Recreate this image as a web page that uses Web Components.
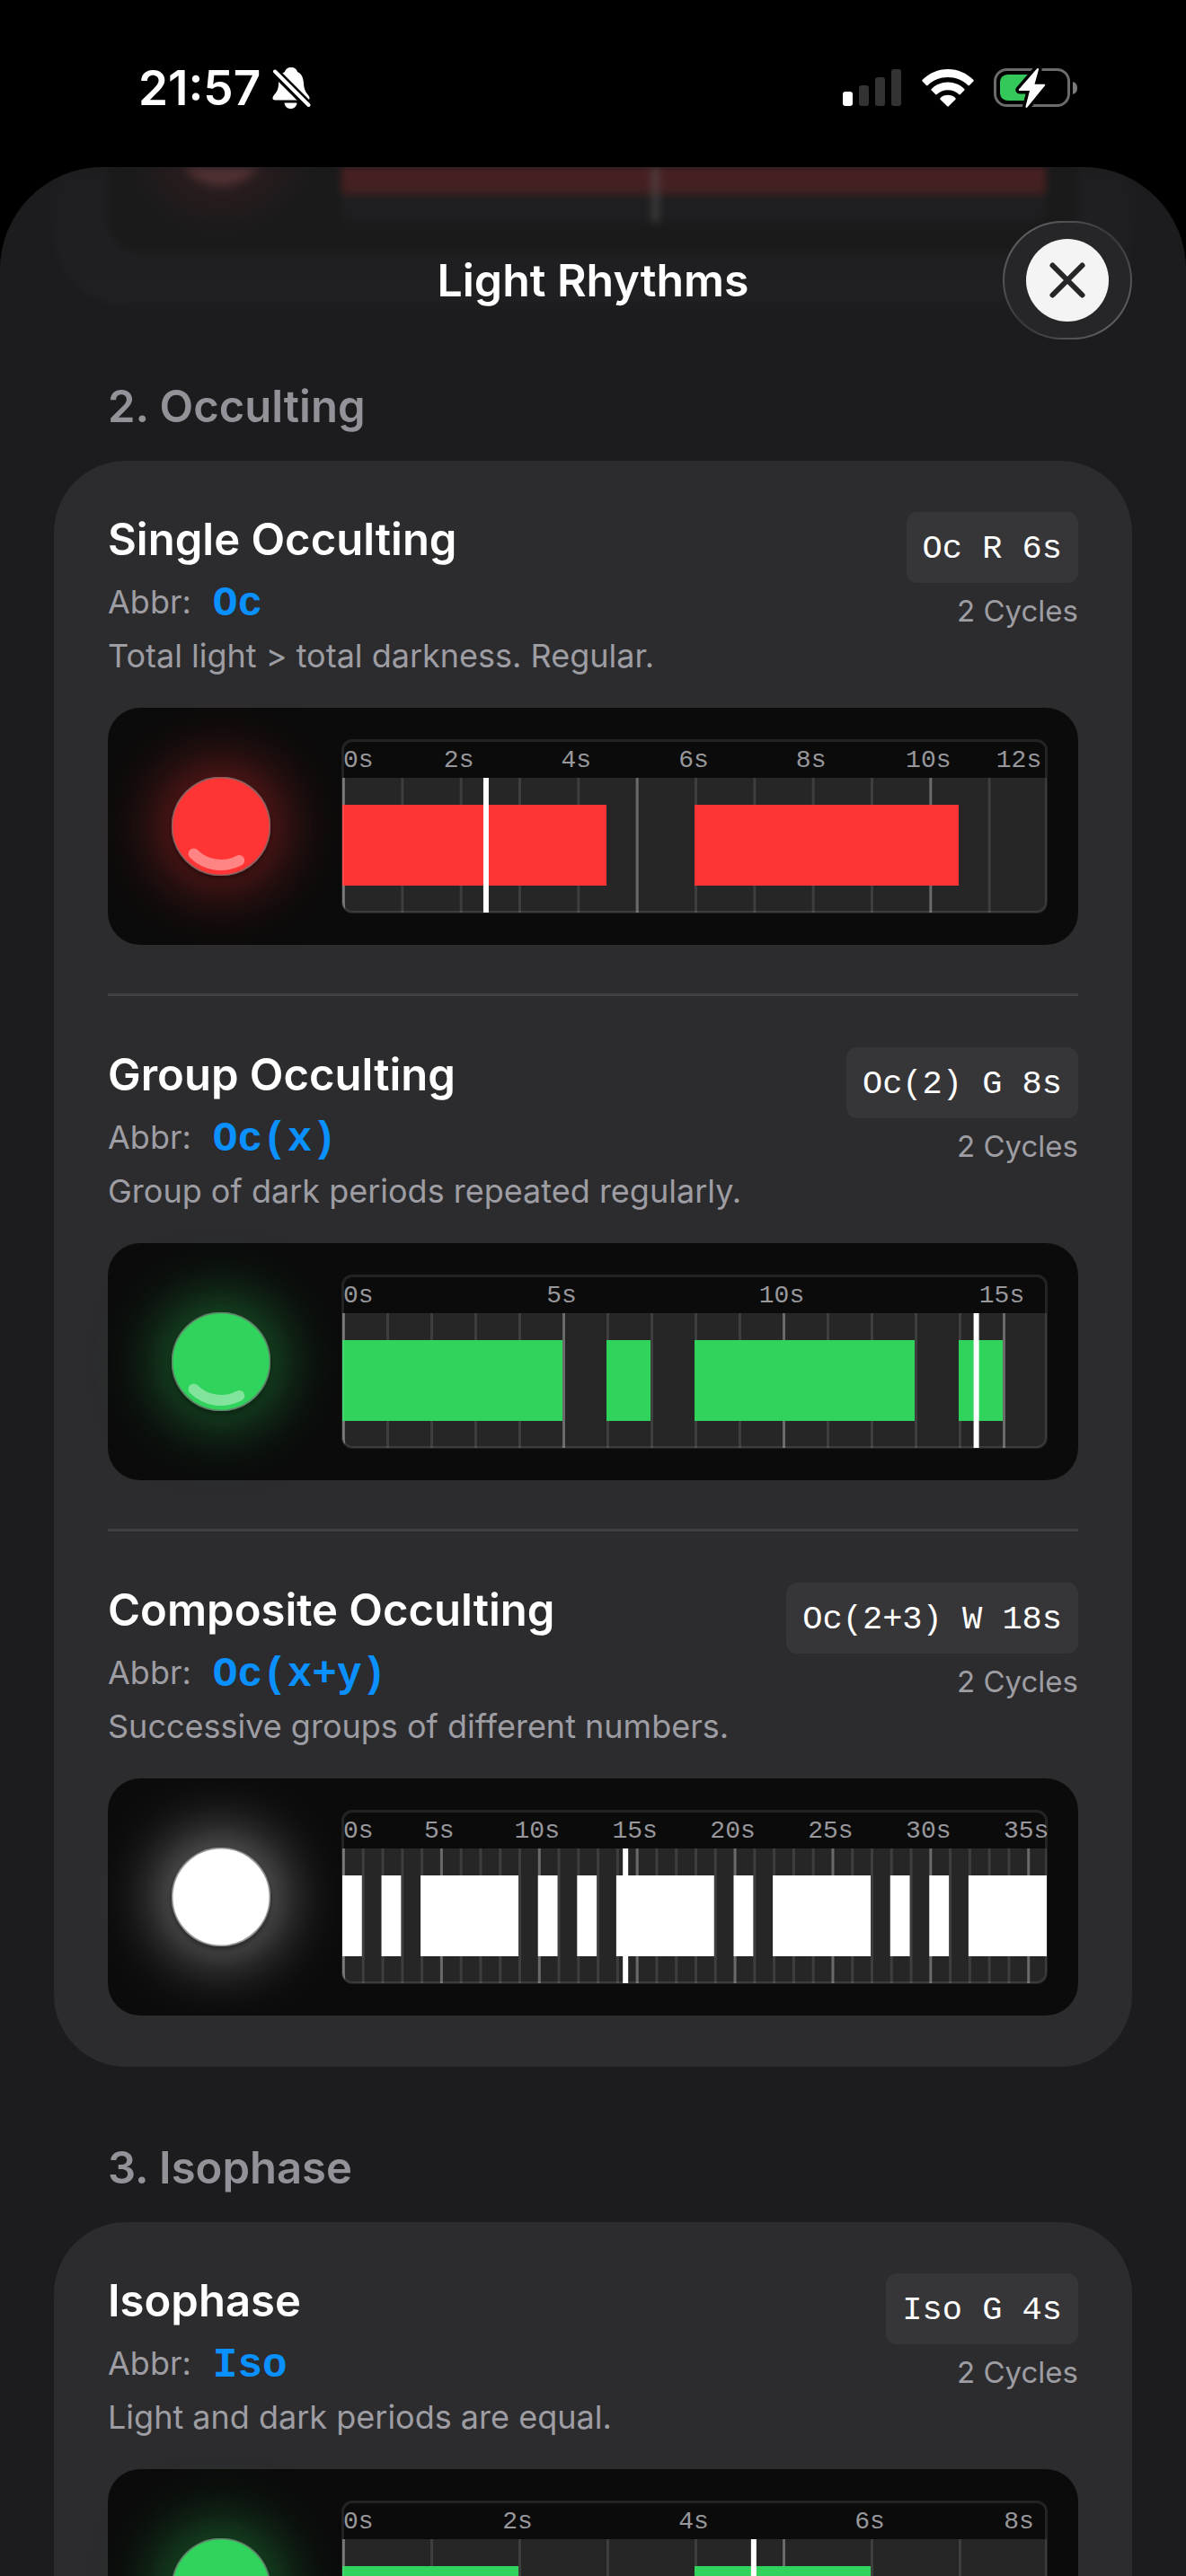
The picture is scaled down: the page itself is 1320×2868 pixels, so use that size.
<!DOCTYPE html>
<html lang="en">
<head>
<meta charset="utf-8">
<meta name="viewport" content="width=device-width, initial-scale=1">
<title>Light Rhythms</title>
<style>
  body {
    margin: 0;
    height: 100vh;
    overflow: hidden;
    display: flex;
    flex-direction: column;
    background: #000;
    color: #fff;
    font-family: Inter, "Liberation Sans", sans-serif;
  }
</style>
</head>
<body>
<status-bar time="21:57"></status-bar>
<app-sheet>
  <sheet-header slot="header">Light Rhythms</sheet-header>
  <rhythm-section heading="2. Occulting">
    <rhythm-item name="Single Occulting" abbr="Oc" code="Oc R 6s" color="#ff3434"
      total="12" step="2" lit="0-4.5 6-10.5" now="20.4">Total light &gt; total darkness. Regular.</rhythm-item>
    <rhythm-item name="Group Occulting" abbr="Oc(x)" code="Oc(2) G 8s" color="#30d35b"
      total="16" step="5" lit="0-5 6-7 8-13 14-15" now="90">Group of dark periods repeated regularly.</rhythm-item>
    <rhythm-item name="Composite Occulting" abbr="Oc(x+y)" code="Oc(2+3) W 18s" color="#ffffff"
      total="36" step="5" lit="0-1 2-3 4-9 10-11 12-13 14-19 20-21 22-27 28-29 30-31 32-36" now="40.2">Successive groups of different numbers.</rhythm-item>
  </rhythm-section>
  <rhythm-section heading="3. Isophase">
    <rhythm-item name="Isophase" abbr="Iso" code="Iso G 4s" color="#30d35b"
      total="8" step="2" lit="0-2 4-6" now="58.4">Light and dark periods are equal.</rhythm-item>
  </rhythm-section>
</app-sheet>

<script>
class StatusBar extends HTMLElement {
  connectedCallback() {
    this.attachShadow({ mode: "open" });
    this.shadowRoot.innerHTML = `
      <style>
        :host {
          display: flex;
          flex: none;
          justify-content: space-between;
          align-items: center;
          box-sizing: border-box;
          height: 186px;
          padding: 10px 120px 0 154px;
        }
        .group {
          display: flex;
          align-items: center;
        }
        .left { gap: 13px; }
        .right { gap: 22px; }
        time {
          font-size: 53px;
          font-weight: 600;
          line-height: 60px;
        }
        svg { display: block; }
      </style>
      <div class="group left">
        <time>${this.getAttribute("time")}</time>
        <svg width="43" height="47" viewBox="0 0 43 47" role="img" aria-label="Silent mode">
          <path fill="#fff" d="M21 0C17 0 14.600 2 14 5C9 7 7 12 7 18C7 26 4 28 1.500 31.500C-.5 34.500 .5 36.500 3.500 36.500H38.500C41.500 36.500 42.500 34.500 40.500 31.500C38 28 35.500 26 35 18C34.600 12 33 7 28 5C27.400 2 25 0 21 0Z"/>
          <path fill="#fff" d="M13.500 39.500H27.500C27 43.500 24.500 46 20.500 46S14 43.500 13.500 39.500Z"/>
          <path d="M2 4L41 43" stroke="#000" stroke-width="10"/>
          <path d="M3 4.500L40.500 42" stroke="#fff" stroke-width="4" stroke-linecap="round"/>
        </svg>
      </div>
      <div class="group right">
        <svg width="66" height="42" viewBox="0 0 66 42" role="img" aria-label="Signal">
          <rect x="0" y="25" width="11" height="16" rx="3" fill="#fff"/>
          <rect x="18" y="18" width="11" height="23" rx="3" fill="#333"/>
          <rect x="36" y="9" width="11" height="32" rx="3" fill="#333"/>
          <rect x="54" y="0" width="11" height="41" rx="3" fill="#333"/>
        </svg>
        <svg width="58" height="42" viewBox="0 0 58 42" role="img" aria-label="Wi-Fi">
          <g fill="#fff">
            <path d="M29 0C18 0 8 4.500 .7 11.800C.1 12.400 .1 13 .6 13.500L5 17.900C5.500 18.400 6.200 18.400 6.700 17.900C12.700 12.100 20.500 9 29 9S45.300 12.100 51.300 17.900C51.800 18.400 52.500 18.400 53 17.900L57.400 13.500C57.900 13 57.900 12.400 57.300 11.800C50 4.500 40 0 29 0Z"/>
            <path d="M29 14.500C21.900 14.500 15.500 17.300 10.800 21.900C10.200 22.500 10.200 23.100 10.700 23.600L15.100 28C15.600 28.500 16.200 28.500 16.800 28C20 25 24.300 23.200 29 23.200S38 25 41.200 28C41.800 28.500 42.400 28.500 42.900 28L47.300 23.600C47.800 23.100 47.800 22.500 47.200 21.900C42.500 17.300 36.100 14.500 29 14.500Z"/>
            <path d="M29 28.800C25.800 28.800 22.900 30 20.700 32C20.100 32.500 20.100 33.200 20.600 33.700L28.200 41.300C28.700 41.800 29.300 41.800 29.800 41.300L37.400 33.700C37.900 33.200 37.900 32.500 37.300 32C35.100 30 32.200 28.800 29 28.800Z"/>
          </g>
        </svg>
        <svg width="94" height="46" viewBox="0 0 94 46" role="img" aria-label="Battery charging">
          <rect x="1.500" y="2.500" width="82" height="40" rx="13" fill="none" stroke="#6b6b6b" stroke-width="3"/>
          <path d="M88 16C91.500 17 93 19.500 93 23S91.500 29 88 30Z" fill="#7a7a7a"/>
          <path d="M16 8H40V37H16C10.500 37 7 33.500 7 28V17C7 11.500 10.500 8 16 8Z" fill="#34c759"/>
          <path d="M48 1.500L28 24.500C27.500 25.300 28 26 28.900 26H40L35.500 43.500C35.200 45 36.500 45.500 37.500 44.300L57 20.300C57.500 19.500 57 18.800 56.100 18.800H45.500L50 2.500C50.300 1 49 .5 48 1.500Z" fill="#fff" stroke="#000" stroke-width="7" paint-order="stroke" stroke-linejoin="round"/>
        </svg>
      </div>
    `;
  }
}

class AppSheet extends HTMLElement {
  connectedCallback() {
    this.attachShadow({ mode: "open" });
    this.shadowRoot.innerHTML = `
      <style>
        :host {
          display: block;
          flex: 1;
          min-height: 0;
          overflow: hidden;
          background: #1c1c1e;
          border-radius: 114px 114px 0 0;
        }
        main {
          display: flex;
          flex-direction: column;
          gap: 82px;
          padding: 0 60px;
        }
      </style>
      <slot name="header"></slot>
      <main><slot></slot></main>
    `;
  }
}

class SheetHeader extends HTMLElement {
  connectedCallback() {
    this.attachShadow({ mode: "open" });
    this.shadowRoot.innerHTML = `
      <style>
        :host {
          display: grid;
          grid-template-columns: 144px 1fr 144px;
          align-items: center;
          position: relative;
          box-sizing: border-box;
          height: 236px;
          padding: 60px 60px 44px;
        }
        h1 {
          grid-column: 2;
          margin: 0;
          font-size: 50px;
          font-weight: 600;
          line-height: 62px;
          text-align: center;
        }
        h1, close-button { position: relative; }

        /* previous card, dimmed behind the bar */
        .behind {
          position: absolute;
          inset: 0;
          padding: 0 60px;
          filter: blur(4px);
        }
        .card {
          height: 154px;
          padding: 0 60px;
          border-radius: 0 0 80px 80px;
          background: linear-gradient(#1e1e20, #202022);
        }
        .panel {
          display: flex;
          justify-content: flex-end;
          height: 95px;
          padding-right: 36px;
          border-radius: 0 0 36px 36px;
          background: radial-gradient(circle at 126px -30px, #4f3032 46px, #281c1d 56px, #1a1a1b 110px);
        }
        .track {
          position: relative;
          width: 784px;
          height: 61px;
          border-radius: 0 0 12px 12px;
          background: #1e1e20;
        }
        .bar {
          height: 31px;
          background: linear-gradient(#4b2022, #402020);
        }
        .now {
          position: absolute;
          top: 0;
          left: 44%;
          width: 9px;
          height: 61px;
          background: rgba(90, 90, 92, .45);
        }
      </style>
      <div class="behind">
        <div class="card"><div class="panel"><div class="track"><div class="bar"></div><div class="now"></div></div></div></div>
      </div>
      <h1><slot></slot></h1>
      <close-button></close-button>
    `;
  }
}

class CloseButton extends HTMLElement {
  connectedCallback() {
    this.attachShadow({ mode: "open" });
    this.shadowRoot.innerHTML = `
      <style>
        :host { display: block; }
        button {
          display: flex;
          align-items: center;
          justify-content: center;
          box-sizing: border-box;
          width: 144px;
          height: 132px;
          margin: 0;
          padding: 0;
          border: 2px solid transparent;
          border-radius: 66px;
          background:
            linear-gradient(#262628, #262628) padding-box,
            linear-gradient(135deg, #5c5c61 15%, #3c3c40 45%, #3c3c40 55%, #5c5c61 85%) border-box;
          cursor: pointer;
        }
        svg { display: block; }
      </style>
      <button type="button" aria-label="Close">
        <svg width="92" height="92" viewBox="0 0 92 92">
          <circle cx="46" cy="46" r="46" fill="#f4f4f4"/>
          <path d="M29.500 29.500L62.500 62.500M62.500 29.500L29.500 62.500" stroke="#262628" stroke-width="6" stroke-linecap="round"/>
        </svg>
      </button>
    `;
  }
}

class RhythmSection extends HTMLElement {
  connectedCallback() {
    this.attachShadow({ mode: "open" });
    this.shadowRoot.innerHTML = `
      <style>
        :host { display: block; }
        h2 {
          margin: 0 0 30px;
          padding: 0 60px;
          font-size: 49px;
          font-weight: 600;
          line-height: 61px;
          color: #929298;
        }
        .card {
          padding: 0 60px 3px;
          border-radius: 80px;
          background: #2c2c2e;
        }
        ::slotted(:not(:last-child)) {
          border-bottom: 3px solid #404042;
        }
      </style>
      <h2>${this.getAttribute("heading")}</h2>
      <div class="card"><slot></slot></div>
    `;
  }
}

class RhythmItem extends HTMLElement {
  connectedCallback() {
    const get = (name) => this.getAttribute(name);
    this.attachShadow({ mode: "open" });
    this.shadowRoot.innerHTML = `
      <style>
        :host {
          display: block;
          padding: 57px 0 54px;
          color: #9d9da3;
          font-size: 36px;
          line-height: 43px;
        }
        .head {
          display: flex;
          justify-content: space-between;
          margin-bottom: 36px;
        }
        .info {
          display: flex;
          flex-direction: column;
          gap: 12px;
        }
        h3 {
          margin: 0;
          color: #fff;
          font-size: 49px;
          font-weight: 600;
          line-height: 61px;
        }
        .abbr {
          display: flex;
          align-items: center;
          gap: 24px;
          height: 54px;
        }
        .abbr b {
          padding-top: 6px;
          color: #0a91ff;
          font-family: "Liberation Mono", monospace;
          font-size: 46px;
          line-height: 54px;
        }
        p { margin: 0; }
        .side {
          display: flex;
          flex-direction: column;
          align-items: flex-end;
          gap: 11px;
        }
        code {
          padding: 20px 18px 16px;
          border-radius: 12px;
          background: #363638;
          color: #fff;
          font-family: "Liberation Mono", monospace;
          font-size: 37px;
          line-height: 43px;
        }
        .cycles {
          font-size: 33px;
          line-height: 40px;
        }
        .panel {
          display: flex;
          align-items: center;
          gap: 45px;
          padding: 36px 35px 36px 36px;
          border-radius: 36px;
          background: #0b0b0b;
        }
        signal-lamp { flex: none; }
        light-timeline { flex: 1; }
      </style>
      <div class="head">
        <div class="info">
          <h3>${get("name")}</h3>
          <div class="abbr"><span>Abbr:</span><b>${get("abbr")}</b></div>
          <p><slot></slot></p>
        </div>
        <div class="side">
          <code>${get("code")}</code>
          <span class="cycles">2 Cycles</span>
        </div>
      </div>
      <div class="panel">
        <signal-lamp color="${get("color")}"></signal-lamp>
        <light-timeline color="${get("color")}" total="${get("total")}" step="${get("step")}"
          lit="${get("lit")}" now="${get("now")}"></light-timeline>
      </div>
    `;
  }
}

class SignalLamp extends HTMLElement {
  connectedCallback() {
    const color = this.getAttribute("color");
    this.attachShadow({ mode: "open" });
    this.shadowRoot.innerHTML = `
      <style>
        :host {
          display: flex;
          justify-content: center;
          width: 180px;
        }
        .lamp {
          width: 110px;
          height: 110px;
          border-radius: 50%;
          background: ${color};
          box-shadow: 0 3px 6px rgba(0, 0, 0, .5), 0 0 72px 10px ${color}80;
        }
        svg { display: block; }
      </style>
      <div class="lamp">
        <svg width="110" height="110" viewBox="0 0 110 110">
          <circle cx="55" cy="55" r="54.500" fill="none" stroke="#6f6f6f" stroke-opacity=".7" stroke-width="2"/>
          <path d="M24.600 85.400A43 43 0 0 0 75.200 93" fill="none" stroke="#fff" stroke-opacity=".4" stroke-width="12" stroke-linecap="round"/>
        </svg>
      </div>
    `;
  }
}

class LightTimeline extends HTMLElement {
  connectedCallback() {
    const total = Number(this.getAttribute("total"));
    const step = Number(this.getAttribute("step"));
    const color = this.getAttribute("color");
    const pct = (t) => (t / total) * 100 + "%";

    let labels = "";
    for (let t = 0; t <= total; t += step) {
      const side = t === 0 ? "first" : t === total ? "last" : "";
      labels += `<span class="${side}" style="left:${pct(t)}">${t}s</span>`;
    }

    let lines = "";
    for (let t = 0; t < total; t++) {
      lines += `<rect x="${pct(t)}" y="0" width="3" height="150" fill="${t % 5 ? "#3e3e3e" : "#6a6a6a"}"/>`;
    }

    const bars = this.getAttribute("lit").split(" ").map((range) => {
      const [from, to] = range.split("-").map(Number);
      return `<rect x="${pct(from)}" y="30" width="${pct(to - from)}" height="90" fill="${color}"/>`;
    }).join("");

    this.attachShadow({ mode: "open" });
    this.shadowRoot.innerHTML = `
      <style>
        :host {
          display: block;
          position: relative;
        }
        .axis {
          position: relative;
          height: 42px;
          color: #98989c;
          font-family: "Liberation Mono", monospace;
          font-size: 28px;
          line-height: 46px;
        }
        .axis span {
          position: absolute;
          transform: translateX(calc(-50% - 1px));
        }
        .axis .first { transform: translateX(1px); }
        .axis .last { transform: translateX(calc(-50% - 31px)); }
        svg { display: block; }
        .track {
          width: 100%;
          height: 150px;
          border-radius: 0 0 12px 12px;
          background: #262626;
        }
        .frame {
          position: absolute;
          inset: -1px;
          border: 3px solid rgba(255, 255, 255, .1);
          border-radius: 12px;
          pointer-events: none;
        }
      </style>
      <div class="axis">${labels}</div>
      <svg class="track">
        ${lines}
        ${bars}
        <svg x="${this.getAttribute("now")}%" overflow="visible"><rect x="-3" width="6" height="150" fill="#fff"/></svg>
      </svg>
      <div class="frame"></div>
    `;
  }
}

customElements.define("status-bar", StatusBar);
customElements.define("app-sheet", AppSheet);
customElements.define("sheet-header", SheetHeader);
customElements.define("close-button", CloseButton);
customElements.define("rhythm-section", RhythmSection);
customElements.define("rhythm-item", RhythmItem);
customElements.define("signal-lamp", SignalLamp);
customElements.define("light-timeline", LightTimeline);
</script>
</body>
</html>
